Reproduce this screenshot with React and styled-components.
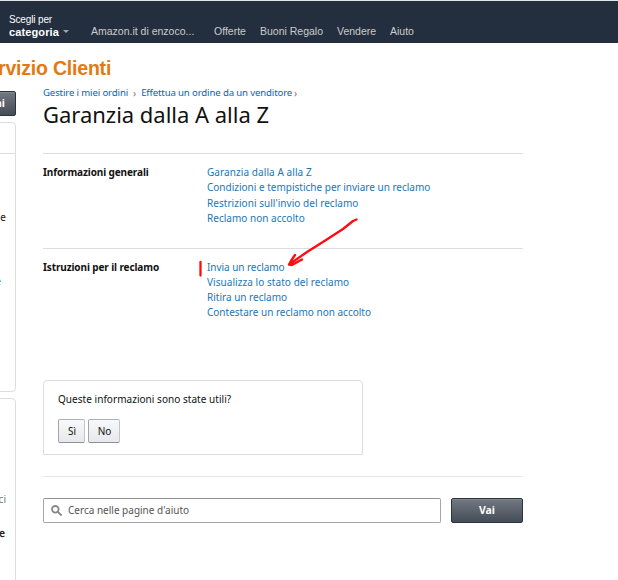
import React from "react";
import styled, { createGlobalStyle } from "styled-components";

const Global = createGlobalStyle`
  * { box-sizing: border-box; }
  body {
    margin: 0; background: #fff; color: #111; overflow: hidden;
    font-family: "Noto Sans", "Open Sans", sans-serif; font-size: 10px;
  }
  h1, h2, h3, p, ul { margin: 0; padding: 0; }
  ul { list-style: none; }
  a { text-decoration: none; color: inherit; }
`;

const Page = styled.div`
  width: 618px; height: 580px; overflow: hidden;
  display: flex; flex-direction: column;
`;
const Header = styled.header`
  flex: none; height: 43px; padding-left: 9px;
  display: flex; align-items: flex-start;
  background: #232f3e; border-top: 1px solid #e4e7e9;
  font-family: "Liberation Sans", Arial, sans-serif; white-space: nowrap;
`;
const Category = styled.div`
  width: 82px; padding-top: 13px; color: #fff; font-size: 10px; line-height: 12px;
  letter-spacing: -0.15px;
`;
const CategoryName = styled.div`
  display: flex; align-items: center; height: 11px;
  font-weight: bold; font-size: 11px; letter-spacing: 0.12px;
`;
const Caret = styled.span`
  margin: 0 0 0 4px; border: 3px solid transparent; border-top-color: #a0a5ab; border-bottom: 0;
`;
const NavLink = styled.a`
  width: ${(p) => p.$w}px; padding-top: 24px; font-size: 10.5px; line-height: 13px; color: #ccc;
  letter-spacing: ${(p) => p.$ls || 0}px;
`;
const Brand = styled.h2`
  flex: none; height: 48px; padding-top: 13px; margin-left: -2px;
  font: bold 19.5px/24px "Liberation Sans", Arial, sans-serif; color: #e47911; white-space: nowrap;
  letter-spacing: -0.2px;
`;
const Columns = styled.div`
  flex: 1; display: flex; align-items: flex-start;
`;
const Sidebar = styled.aside`
  width: 16px; height: 489px; display: flex; flex-direction: column; overflow: hidden;
`;
const DarkButton = styled.button`
  display: flex; align-items: center; justify-content: center;
  width: ${(p) => p.$w}px; height: 25px; flex: none; padding: 0 0 1px;
  border: 1px solid #2c333d; border-radius: 2px;
  background: linear-gradient(#737981, #444c57);
  box-shadow: inset 0 1px 0 rgba(255,255,255,.12);
  color: #fff; font: bold 10.5px "Noto Sans", sans-serif;
`;
const SideButton = styled(DarkButton)`
  margin-left: -10px; justify-content: flex-end; padding-right: 10px;
`;
const SideCard = styled.div`
  flex: none; height: ${(p) => p.$h}px; margin: ${(p) => p.$mt}px 0 0 -6px;
  border: 1px solid #ddd; border-radius: 4px; display: flex; flex-direction: column;
`;
const SideHead = styled.div`
  height: 31px; flex: none; border-bottom: 1px solid #ddd;
`;
const SideText = styled.span`
  display: flex; justify-content: flex-end; flex: none; align-self: flex-start;
  width: ${(p) => p.$r + 5}px; height: 14px; margin-top: ${(p) => p.$mt}px;
  line-height: 14px; color: ${(p) => p.$c || "#111"};
  -webkit-text-stroke: ${(p) => (p.$bold ? 0.3 : 0)}px;
`;
const Main = styled.main`
  width: 480px; margin-left: 27px; white-space: nowrap;
`;
const Crumbs = styled.nav`
  margin-top: -6px; height: 15px; display: flex; align-items: center;
  font-size: 9.6px; color: #777;
`;
const Crumb = styled.a`
  color: #0066c0; letter-spacing: -0.13px;
`;
const Chevron = styled.span`
  margin: 0 ${(p) => p.$mx}px; font-size: 10px; line-height: 12px;
`;
const Title = styled.h1`
  height: 53px; font-weight: 400; font-size: 22px; line-height: 28px;
  letter-spacing: -0.02px;
`;
const Section = styled.section`
  display: flex; height: ${(p) => p.$h}px; padding-top: 11px; border-top: 1px solid #ddd;
`;
const SectionTitle = styled.h3`
  width: 164px; font-size: 10px; line-height: 14px; letter-spacing: -0.11px;
`;
const Item = styled.li`
  height: ${(p) => p.$h}px; line-height: 15px; color: #1b76b6;
  letter-spacing: ${(p) => p.$ls || 0}px;
`;
const Marked = styled.span`
  position: relative;
`;
const Ink = styled.svg`
  position: absolute; left: -10px; top: -46px; pointer-events: none;
`;
const Feedback = styled.section`
  width: 320px; height: 75px; padding: 11px 14px; border: 1px solid #ddd;
  border-radius: 4px 4px 0 0;
`;
const Question = styled.p`
  line-height: 15px; letter-spacing: 0.04px;
`;
const Answers = styled.div`
  display: flex; gap: 3px; margin-top: 12px;
`;
const Answer = styled.button`
  width: ${(p) => p.$w}px; height: 24px; padding: 0 0 0 1px;
  border: 1px solid; border-color: #adb1b8 #c2c5cb #8d9096 #a2a6ac; border-radius: 2px;
  background: linear-gradient(#f7f8fa, #e7e9ec); color: #111;
  font: 10px "Noto Sans", sans-serif;
`;
const Search = styled.form`
  display: flex; gap: 10px; margin-top: 21px; padding-top: 21px; border-top: 1px solid #e7e7e7;
`;
const Field = styled.div`
  display: flex; align-items: center; gap: 6px; width: 398px; height: 25px; padding: 0 0 1px 7px;
  border: 1px solid #a6a6a6; border-top-color: #8f9294; border-radius: 2px; color: #555;
`;

const general = [
  ["Garanzia dalla A alla Z", 0.08, 15],
  ["Condizioni e tempistiche per inviare un reclamo", 0, 16],
  ["Restrizioni sull'invio del reclamo", 0.04, 15],
  ["Reclamo non accolto", 0.02, 15],
];
const steps = [
  ["Visualizza lo stato del reclamo", 0.06],
  ["Ritira un reclamo", 0],
  ["Contestare un reclamo non accolto", 0],
];

export default function App() {
  return (
    <Page>
      <Global />
      <Header>
        <Category>
          Scegli per
          <CategoryName>categoria<Caret /></CategoryName>
        </Category>
        <NavLink $w={123}>Amazon.it di enzoco...</NavLink>
        <NavLink $w={46}>Offerte</NavLink>
        <NavLink $w={77}>Buoni Regalo</NavLink>
        <NavLink $w={53}>Vendere</NavLink>
        <NavLink $w={40}>Aiuto</NavLink>
      </Header>
      <Brand>rvizio Clienti</Brand>
      <Columns>
        <Sidebar>
          <SideButton $w={26}>ni</SideButton>
          <SideCard $h={270} $mt={6}>
            <SideHead />
            <SideText $mt={56} $r={6}>e</SideText>
            <SideText $mt={50} $r={1} $c="#0066c0">e</SideText>
          </SideCard>
          <SideCard $h={200} $mt={6}>
            <SideText $mt={93} $r={6} $c="#777">ci</SideText>
            <SideText $mt={20} $r={5} $bold>e</SideText>
          </SideCard>
        </Sidebar>
        <Main>
          <Crumbs>
            <Crumb>Gestire i miei ordini</Crumb>
            <Chevron $mx={5}>›</Chevron>
            <Crumb>Effettua un ordine da un venditore</Crumb>
            <Chevron $mx={2}>›</Chevron>
          </Crumbs>
          <Title>Garanzia dalla A alla Z</Title>
          <Section $h={95}>
            <SectionTitle>Informazioni generali</SectionTitle>
            <ul>
              {general.map(([t, ls, h]) => <Item key={t} $ls={ls} $h={h}>{t}</Item>)}
            </ul>
          </Section>
          <Section $h={132}>
            <SectionTitle>Istruzioni per il reclamo</SectionTitle>
            <ul>
              <Item $h={15} $ls={-0.05}>
                <Marked>
                  Invia un reclamo
                  <Ink width="165" height="64" viewBox="197 214 165 64" fill="none" stroke="#ff0a10" strokeWidth="2.3" strokeLinecap="round" strokeLinejoin="round">
                    <path d="M200.5 262V275.5" />
                    <path d="M356.5 219.5L353 221L343 229L326 240L307 252L289 264.5M295 255L291.5 260L289 264.5L292 265L302 259.5" />
                  </Ink>
                </Marked>
              </Item>
              {steps.map(([t, ls]) => <Item key={t} $ls={ls} $h={15}>{t}</Item>)}
            </ul>
          </Section>
          <Feedback>
            <Question>Queste informazioni sono state utili?</Question>
            <Answers>
              <Answer $w={27}>Sì</Answer>
              <Answer $w={32}>No</Answer>
            </Answers>
          </Feedback>
          <Search>
            <Field>
              <svg width="11" height="11" viewBox="0 0 11 11" fill="none" stroke="#888" strokeWidth="1.8">
                <circle cx="4.3" cy="4.3" r="3.3" />
                <path d="M6.8 6.8L10 10" strokeLinecap="round" />
              </svg>
              Cerca nelle pagine d'aiuto
            </Field>
            <DarkButton type="button" $w={72}>Vai</DarkButton>
          </Search>
        </Main>
      </Columns>
    </Page>
  );
}
